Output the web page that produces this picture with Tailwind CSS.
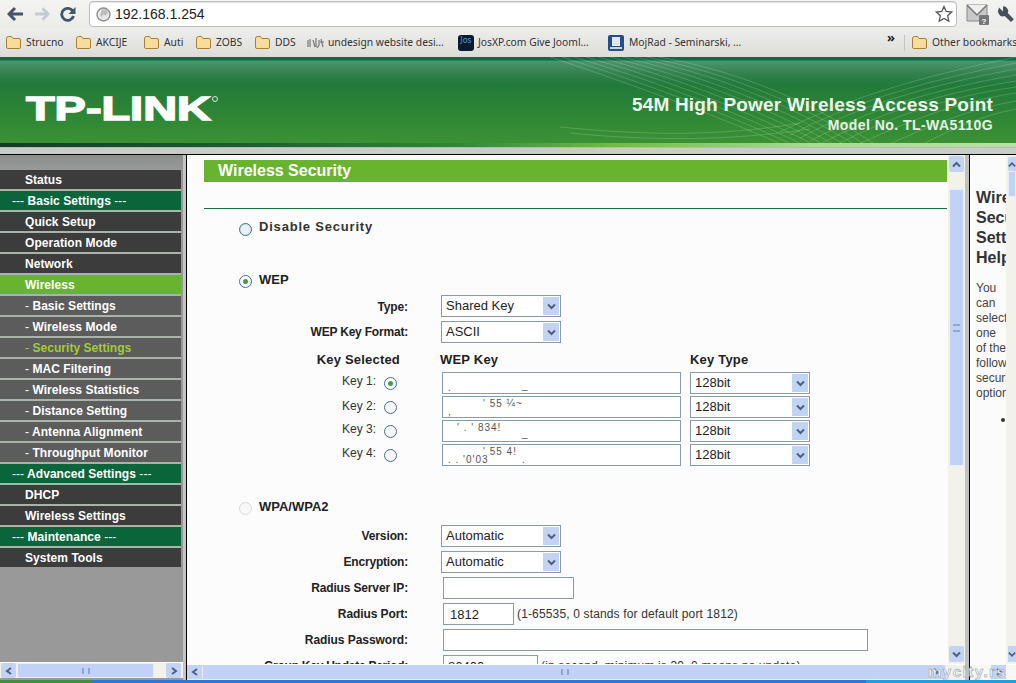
<!DOCTYPE html>
<html><head><meta charset="utf-8"><script src="https://cdn.jsdelivr.net/npm/@tailwindcss/browser@4"></script></head>
<body class="w-[1016px] h-[683px] overflow-hidden bg-[#c8cdc8] font-['Liberation_Sans',sans-serif] text-[#222]">
<div class="relative w-[1016px] h-[683px] flex flex-col overflow-hidden">

<!-- toolbar -->
<div class="h-[28px] flex items-center bg-gradient-to-b from-[#f4f4f2] to-[#ebebe8]">
  <div class="w-[89px] h-full flex items-center pl-[7px] gap-[10px]">
    <svg class="w-[17px] h-[16px]" viewBox="0 0 17 16"><path d="M8 2 2 8l6 6M2.500 8H16" fill="none" stroke="#44546a" stroke-width="3"/></svg>
    <svg class="w-[16px] h-[16px]" viewBox="0 0 17 16"><path d="M9 2l6 6-6 6M14.500 8H1" fill="none" stroke="#c6cad0" stroke-width="3"/></svg>
    <svg class="w-[16px] h-[16px]" viewBox="0 0 16 16"><path d="M13 5.500A6 6 0 1 0 13.500 10" fill="none" stroke="#44546a" stroke-width="2.800"/><path d="M15.500 1v7h-7z" fill="#44546a"/></svg>
  </div>
  <div class="w-[868px] h-[26px] flex items-center bg-white border border-[#bdbdbb] rounded-[4px] pl-[6px] shadow-[inset_0_1px_1px_#e5e5e5]">
    <svg class="w-[15px] h-[15px]" viewBox="0 0 15 15"><circle cx="7.500" cy="7.500" r="6.500" fill="#e8e8e8" stroke="#8d8d8d" stroke-width="1.400"/><path d="M6 2.500c3-1 5 1 6 3l-2 3-3-1-1 3-2-3 1-2z" fill="#bdbdbd"/></svg>
    <span class="ml-[4px] text-[14px] text-[#222]">192.168.1.254</span>
    <svg class="ml-auto mr-[3px] w-[18px] h-[18px]" viewBox="0 0 18 18"><path d="M9 1.500l2.300 5 5.400.6-4 3.700 1.100 5.400L9 13.500l-4.800 2.700 1.100-5.400-4-3.700 5.400-.6z" fill="#fff" stroke="#555" stroke-width="1.300"/></svg>
  </div>
  <svg class="ml-[9px] w-[24px] h-[24px]" viewBox="0 0 24 24"><path d="M1 3h20v16H1z" fill="#c9c9c9" stroke="#8a8a8a"/><path d="M1 3l10 10L21 3" fill="#eee" stroke="#777" stroke-width="1.500"/><rect x="13" y="13" width="10" height="10" rx="1" fill="#777"/><text x="18" y="21.500" font-size="8" font-weight="700" fill="#fff" text-anchor="middle" font-family="Liberation Sans">?</text></svg>
  <svg class="ml-[7px] w-[18px] h-[18px]" viewBox="0 0 18 18"><path d="M2 2.500 6 6.500V1.200A5 5 0 0 1 10.800 8l6 6.300-2.800 2.800-6.300-6A5 5 0 0 1 1 6z" fill="#44505f"/></svg>
</div>

<!-- bookmarks -->
<div class="h-[29px] flex items-center pl-[6px] text-[10.300px] text-[#333] font-['Noto_Sans',sans-serif] bg-gradient-to-b from-[#eeeeec] to-[#dcdcd9] whitespace-nowrap">
  <div class="w-[70px] shrink-0 flex items-center gap-[5px]"><svg class="w-[15px] h-[13px] shrink-0" viewBox="0 0 15 13"><path d="M.5 2.500q0-2 2-2h3l1.500 2h6q1.500 0 1.500 1.500v7q0 1.500-1.500 1.500h-11q-1.500 0-1.500-1.500z" fill="#f7dc9b" stroke="#a97f35"/></svg><span>Strucno</span></div>
  <div class="w-[68px] shrink-0 flex items-center gap-[5px]"><svg class="w-[15px] h-[13px] shrink-0" viewBox="0 0 15 13"><path d="M.5 2.500q0-2 2-2h3l1.500 2h6q1.500 0 1.500 1.500v7q0 1.500-1.500 1.500h-11q-1.500 0-1.500-1.500z" fill="#f7dc9b" stroke="#a97f35"/></svg><span>AKCIJE</span></div>
  <div class="w-[52px] shrink-0 flex items-center gap-[5px]"><svg class="w-[15px] h-[13px] shrink-0" viewBox="0 0 15 13"><path d="M.5 2.500q0-2 2-2h3l1.500 2h6q1.500 0 1.500 1.500v7q0 1.500-1.500 1.500h-11q-1.500 0-1.500-1.500z" fill="#f7dc9b" stroke="#a97f35"/></svg><span>Auti</span></div>
  <div class="w-[59px] shrink-0 flex items-center gap-[5px]"><svg class="w-[15px] h-[13px] shrink-0" viewBox="0 0 15 13"><path d="M.5 2.500q0-2 2-2h3l1.500 2h6q1.500 0 1.500 1.500v7q0 1.500-1.500 1.500h-11q-1.500 0-1.500-1.500z" fill="#f7dc9b" stroke="#a97f35"/></svg><span>ZOBS</span></div>
  <div class="w-[52px] shrink-0 flex items-center gap-[5px]"><svg class="w-[15px] h-[13px] shrink-0" viewBox="0 0 15 13"><path d="M.5 2.500q0-2 2-2h3l1.500 2h6q1.500 0 1.500 1.500v7q0 1.500-1.500 1.500h-11q-1.500 0-1.500-1.500z" fill="#f7dc9b" stroke="#a97f35"/></svg><span>DDS</span></div>
  <div class="w-[151px] shrink-0 flex items-center gap-[4px]"><svg class="w-[17px] h-[12px] shrink-0" viewBox="0 0 17 12"><path d="M1 3v7M3 2v8M6 3l2 7M9 1v9M12 3v5l-2 3M14 2l2 8M13 5h4" stroke="#777" stroke-width="1.200" fill="none"/></svg><span>undesign website desi...</span></div>
  <div class="w-[150px] shrink-0 flex items-center gap-[4px]"><span class="w-[16px] h-[16px] shrink-0 rounded-[3px] bg-[#0c1a2c] text-[#4f9be0] text-[8px] leading-[9px] text-center overflow-hidden">Jos</span><span>JosXP.com Give Jooml...</span></div>
  <div class="w-[279px] shrink-0 flex items-center gap-[5px]"><svg class="w-[16px] h-[16px] shrink-0" viewBox="0 0 16 16"><rect width="16" height="16" rx="2" fill="#224f86"/><path d="M4 2h8v9H4z" fill="#dfe8f2"/><path d="M2 12h12v2H2z" fill="#c5d4e4"/></svg><span>MojRad - Seminarski, ...</span></div>
  <div class="w-[17px] shrink-0 font-bold text-[13px] -mt-[9px] text-[#222]">»</div>
  <div class="w-[8px] h-[16px] shrink-0 border-l border-[#c4c4c2]"></div>
  <div class="flex items-center gap-[5px]"><svg class="w-[15px] h-[13px] shrink-0" viewBox="0 0 15 13"><path d="M.5 2.500q0-2 2-2h3l1.500 2h6q1.500 0 1.500 1.500v7q0 1.500-1.500 1.500h-11q-1.500 0-1.500-1.500z" fill="#f7dc9b" stroke="#a97f35"/></svg><span>Other bookmarks</span></div>
</div>

<!-- header -->
<div class="relative h-[91px] overflow-hidden bg-[linear-gradient(180deg,#0f6a3f_0,#0f6a3f_3px,#4d9470_4px,#2f8048_18px,#227a3a_28px,#2f8735_60px,#3b9134_86px)]">
  <svg class="absolute inset-0 w-[1016px] h-[91px]" viewBox="0 0 1016 91" fill="none" stroke="#fff" stroke-opacity=".25" stroke-width=".7">
    <path d="M550 0C640 30 720 60 790 91"/><path d="M562 0C650 28 730 58 800 91"/><path d="M574 0C660 26 740 56 810 91"/><path d="M586 0C670 24 750 54 820 91"/><path d="M598 0C680 22 760 52 830 91"/><path d="M610 0C690 20 770 50 840 91"/><path d="M622 0C700 18 780 48 850 91"/><path d="M634 0C710 16 790 46 860 91"/><path d="M646 0C720 14 800 44 870 91"/><path d="M658 0C730 12 810 42 880 91"/>
    <path d="M1016 0C920 20 850 40 780 75"/><path d="M1016 6C925 24 855 44 790 78"/><path d="M1016 12C930 28 860 48 800 81"/><path d="M1016 18C935 32 870 52 810 84"/><path d="M1016 24C940 36 880 56 820 87"/><path d="M1016 30C945 40 890 60 830 91"/><path d="M1016 36C950 46 905 66 850 91"/><path d="M1016 44C960 54 925 72 880 91"/><path d="M1016 52C975 60 945 76 915 91"/>
    <path d="M560 70C640 78 720 80 800 66"/><path d="M570 76C650 84 730 84 810 72"/>
  </svg>
  <div class="absolute left-0 bottom-[1px] w-full h-[4px] bg-[linear-gradient(90deg,#17392a_0,#1c5f34_25%,#2a8a35_45%,#6cbc45_60%,#a8dc8a_80%,#b8e0a8_100%)]"></div>
  <div class="absolute left-0 bottom-0 w-full h-[1px] bg-[#b4bdb4]"></div>
  <div class="absolute left-[26px] top-[35px] origin-left scale-x-[1.42] text-[33px] leading-[33px] font-bold text-white [-webkit-text-stroke:1.4px_white] whitespace-nowrap">TP-LINK</div>
  <div class="absolute left-[212px] top-[39px] w-[6px] h-[6px] rounded-full border border-white/80"></div>
  <div class="absolute right-[23px] top-[36px] text-[19px] leading-[24px] font-bold text-[#eef5ec] tracking-[.2px] whitespace-nowrap text-right">54M High Power Wireless Access Point</div>
  <div class="absolute right-[23px] top-[59px] text-[14px] leading-[18px] font-bold text-[#e8f2e6] tracking-[.45px] whitespace-nowrap text-right">Model No. TL-WA5110G</div>
</div>

<div class="h-[6px] bg-[#c8cdc8]"></div>

<!-- frames -->
<div class="flex h-[526px] border-t border-black">
  <!-- left frame -->
  <div class="w-[183px] shrink-0 flex flex-col bg-[#999] bg-[linear-gradient(180deg,#8b8f8c_0,#999_15px)]">
    <div class="flex-1 pt-[15px] pr-[2px]">
      <div class="flex flex-col gap-[2px] bg-[#a9b3aa] text-[12px] font-bold text-white tracking-[.05px] leading-[20px]">
        <div class="h-[19px] pl-[25px] bg-[#3c3c3c]">Status</div>
        <div class="h-[19px] pl-[12px] bg-[#0a663a]"><span class="font-normal">---</span> Basic Settings <span class="font-normal">---</span></div>
        <div class="h-[19px] pl-[25px] bg-[#3c3c3c]">Quick Setup</div>
        <div class="h-[19px] pl-[25px] bg-[#3c3c3c]">Operation Mode</div>
        <div class="h-[19px] pl-[25px] bg-[#3c3c3c]">Network</div>
        <div class="h-[19px] pl-[25px] bg-[#69b42e]">Wireless</div>
        <div class="h-[19px] pl-[25px] bg-[#5c5c5c]"><span class="font-normal">-</span> Basic Settings</div>
        <div class="h-[19px] pl-[25px] bg-[#5c5c5c]"><span class="font-normal">-</span> Wireless Mode</div>
        <div class="h-[19px] pl-[25px] bg-[#5c5c5c] text-[#a4cb35]"><span class="font-normal">-</span> Security Settings</div>
        <div class="h-[19px] pl-[25px] bg-[#5c5c5c]"><span class="font-normal">-</span> MAC Filtering</div>
        <div class="h-[19px] pl-[25px] bg-[#5c5c5c]"><span class="font-normal">-</span> Wireless Statistics</div>
        <div class="h-[19px] pl-[25px] bg-[#5c5c5c]"><span class="font-normal">-</span> Distance Setting</div>
        <div class="h-[19px] pl-[25px] bg-[#5c5c5c]"><span class="font-normal">-</span> Antenna Alignment</div>
        <div class="h-[19px] pl-[25px] bg-[#5c5c5c]"><span class="font-normal">-</span> Throughput Monitor</div>
        <div class="h-[19px] pl-[12px] bg-[#0a663a]"><span class="font-normal">---</span> Advanced Settings <span class="font-normal">---</span></div>
        <div class="h-[19px] pl-[25px] bg-[#3c3c3c]">DHCP</div>
        <div class="h-[19px] pl-[25px] bg-[#3c3c3c]">Wireless Settings</div>
        <div class="h-[19px] pl-[12px] bg-[#0a663a]"><span class="font-normal">---</span> Maintenance <span class="font-normal">---</span></div>
        <div class="h-[19px] pl-[25px] bg-[#3c3c3c]">System Tools</div>
      </div>
    </div>
    <!-- left hscroll -->
    <div class="h-[16px] mb-[2px] flex items-center bg-[#f3f2ea] border-t border-white">
      <div class="w-[15px] h-[15px] ml-[1px] rounded-[2px] bg-[#c3d3f4] flex items-center justify-center"><svg class="w-[8px] h-[8px]" viewBox="0 0 8 8"><path d="M6 1 2 4l4 3" fill="none" stroke="#4d6185" stroke-width="2"/></svg></div>
      <div class="ml-[1px] w-[137px] h-[15px] bg-[#c1d2f6] rounded-[2px] border border-[#e6edfb] flex items-center justify-center"><span class="w-[8px] h-[6px] border-x-2 border-[#8ea6d4]"></span></div>
      <div class="ml-auto w-[15px] h-[15px] mr-[2px] rounded-[2px] bg-[#c3d3f4] flex items-center justify-center"><svg class="w-[8px] h-[8px]" viewBox="0 0 8 8"><path d="M2 1l4 3-4 3" fill="none" stroke="#4d6185" stroke-width="2"/></svg></div>
    </div>
  </div>
  <div class="w-[3px] shrink-0 bg-[#c4c4c4]"></div>
  <!-- main frame -->
  <div class="w-[779px] shrink-0 flex flex-col border-l border-black bg-[#fbfcfb]">
    <div class="h-[509px] flex overflow-hidden">
      <div class="w-[761px] pl-[17px] overflow-hidden whitespace-nowrap">
        <div class="mt-[5px] h-[22px] w-[743px] pl-[14px] bg-[#69b42e] text-white font-bold text-[16px] leading-[21px]">Wireless Security</div>
        <div class="mt-[26px] h-[1px] w-[743px] bg-[#1a6d42]"></div>
        <div class="mt-[8px] h-[20px] flex items-center pl-[35px]">
          <span class="w-[13px] h-[13px] mt-[5px] rounded-full border border-[#44708f] bg-[#eef1f4] shadow-[inset_0_0_2px_#9cb]"></span>
          <span class="ml-[7px] text-[13px] font-bold tracking-[.8px] text-[#333]">Disable Security</span>
        </div>
        <div class="mt-[33px] h-[20px] flex items-center pl-[35px]">
          <span class="w-[13px] h-[13px] mt-[3px] rounded-full border border-[#44708f] bg-white flex items-center justify-center"><span class="w-[5px] h-[5px] rounded-full bg-[#3f9d50]"></span></span>
          <span class="ml-[7px] text-[13px] font-bold text-[#222]">WEP</span>
        </div>
        <div class="mt-[5px] h-[22px] flex items-center -ml-[17px]"><span class="w-[221px] mt-[1px] text-right text-[12px] font-bold tracking-[-.1px] text-[#222]">Type:</span><div class="ml-[33px] w-[120px] h-[22px] flex items-center justify-between border border-[#8a9ba8] bg-white pl-[4px] text-[13px]">Shared Key<span class="w-[16px] h-[18px] mr-[1px] bg-[#c3d3f4] flex items-center justify-center"><svg class="w-[9px] h-[7px]" viewBox="0 0 9 7"><path d="M1 1.500l3.500 3.500L8 1.500" fill="none" stroke="#4d6185" stroke-width="2"/></svg></span></div></div>
        <div class="mt-[4px] h-[22px] flex items-center -ml-[17px]"><span class="w-[221px] text-right text-[12px] font-bold tracking-[-.2px] text-[#222]">WEP Key Format:</span><div class="ml-[33px] w-[120px] h-[22px] flex items-center justify-between border border-[#8a9ba8] bg-white pl-[4px] text-[13px]">ASCII<span class="w-[16px] h-[18px] mr-[1px] bg-[#c3d3f4] flex items-center justify-center"><svg class="w-[9px] h-[7px]" viewBox="0 0 9 7"><path d="M1 1.500l3.500 3.500L8 1.500" fill="none" stroke="#4d6185" stroke-width="2"/></svg></span></div></div>
        <div class="mt-[7px] h-[20px] flex items-center -ml-[17px] text-[13px] font-bold tracking-[.2px] text-[#222]"><span class="w-[213px] text-right">Key Selected</span><span class="ml-[40px] w-[250px]">WEP Key</span><span>Key Type</span></div>
        <div class="mt-[2px] h-[22px] flex items-center -ml-[17px]"><span class="w-[189px] -mt-[4px] text-right text-[12px] text-[#333]">Key 1:</span><span class="ml-[8px] mt-[1px] w-[13px] h-[13px] rounded-full border border-[#44708f] bg-white flex items-center justify-center"><span class="w-[5px] h-[5px] rounded-full bg-[#3f9d50]"></span></span><span class="relative ml-[45px] w-[239px] h-[22px] border border-[#8a9ba8] bg-white overflow-hidden text-[10px] leading-[12px] text-[#555]"><span class="absolute left-[5px] top-[9px]">.</span><span class="absolute left-[79px] top-[7px]">_</span></span><div class="ml-[9px] w-[120px] h-[22px] flex items-center justify-between border border-[#8a9ba8] bg-white pl-[4px] text-[13px]">128bit<span class="w-[16px] h-[18px] mr-[1px] bg-[#c3d3f4] flex items-center justify-center"><svg class="w-[9px] h-[7px]" viewBox="0 0 9 7"><path d="M1 1.500l3.500 3.500L8 1.500" fill="none" stroke="#4d6185" stroke-width="2"/></svg></span></div></div>
        <div class="mt-[2px] h-[22px] flex items-center -ml-[17px]"><span class="w-[189px] -mt-[3px] text-right text-[12px] text-[#333]">Key 2:</span><span class="ml-[8px] w-[13px] h-[13px] rounded-full border border-[#44708f] bg-[#f6f6f6]"></span><span class="relative ml-[45px] w-[239px] h-[22px] border border-[#8a9ba8] bg-white overflow-hidden text-[10px] leading-[12px] text-[#555]"><span class="absolute left-[5px] top-[9px]">,</span><span class="absolute left-[40px] top-[1px] tracking-[1px]">' 55 ¼~</span></span><div class="ml-[9px] w-[120px] h-[22px] flex items-center justify-between border border-[#8a9ba8] bg-white pl-[4px] text-[13px]">128bit<span class="w-[16px] h-[18px] mr-[1px] bg-[#c3d3f4] flex items-center justify-center"><svg class="w-[9px] h-[7px]" viewBox="0 0 9 7"><path d="M1 1.500l3.500 3.500L8 1.500" fill="none" stroke="#4d6185" stroke-width="2"/></svg></span></div></div>
        <div class="mt-[2px] h-[22px] flex items-center -ml-[17px]"><span class="w-[189px] -mt-[4px] text-right text-[12px] text-[#333]">Key 3:</span><span class="ml-[8px] w-[13px] h-[13px] rounded-full border border-[#44708f] bg-[#f6f6f6]"></span><span class="relative ml-[45px] w-[239px] h-[22px] border border-[#8a9ba8] bg-white overflow-hidden text-[10px] leading-[12px] text-[#555]"><span class="absolute left-[14px] top-[1px] tracking-[1px]">' . ' 834!</span><span class="absolute left-[79px] top-[7px]">_</span></span><div class="ml-[9px] w-[120px] h-[22px] flex items-center justify-between border border-[#8a9ba8] bg-white pl-[4px] text-[13px]">128bit<span class="w-[16px] h-[18px] mr-[1px] bg-[#c3d3f4] flex items-center justify-center"><svg class="w-[9px] h-[7px]" viewBox="0 0 9 7"><path d="M1 1.500l3.500 3.500L8 1.500" fill="none" stroke="#4d6185" stroke-width="2"/></svg></span></div></div>
        <div class="mt-[2px] h-[22px] flex items-center -ml-[17px]"><span class="w-[189px] -mt-[4px] text-right text-[12px] text-[#333]">Key 4:</span><span class="ml-[8px] w-[13px] h-[13px] rounded-full border border-[#44708f] bg-[#f6f6f6]"></span><span class="relative ml-[45px] w-[239px] h-[22px] border border-[#8a9ba8] bg-white overflow-hidden text-[10px] leading-[12px] text-[#555]"><span class="absolute left-[40px] top-[1px] tracking-[1px]">' 55 4!</span><span class="absolute left-[5px] top-[9px] tracking-[1px]">. . '0'03</span><span class="absolute left-[79px] top-[9px]">.</span></span><div class="ml-[9px] w-[120px] h-[22px] flex items-center justify-between border border-[#8a9ba8] bg-white pl-[4px] text-[13px]">128bit<span class="w-[16px] h-[18px] mr-[1px] bg-[#c3d3f4] flex items-center justify-center"><svg class="w-[9px] h-[7px]" viewBox="0 0 9 7"><path d="M1 1.500l3.500 3.500L8 1.500" fill="none" stroke="#4d6185" stroke-width="2"/></svg></span></div></div>
        <div class="mt-[31px] h-[20px] flex items-center pl-[35px]">
          <span class="w-[13px] h-[13px] mt-[3px] rounded-full border border-[#d8d8d8] bg-[#f8f8f8]"></span>
          <span class="ml-[7px] text-[13px] font-bold text-[#222]">WPA/WPA2</span>
        </div>
        <div class="mt-[8px] h-[22px] flex items-center -ml-[17px]"><span class="w-[221px] text-right text-[12px] font-bold tracking-[-.1px] text-[#222]">Version:</span><div class="ml-[33px] w-[120px] h-[22px] flex items-center justify-between border border-[#8a9ba8] bg-white pl-[4px] text-[13px]">Automatic<span class="w-[16px] h-[18px] mr-[1px] bg-[#c3d3f4] flex items-center justify-center"><svg class="w-[9px] h-[7px]" viewBox="0 0 9 7"><path d="M1 1.500l3.500 3.500L8 1.500" fill="none" stroke="#4d6185" stroke-width="2"/></svg></span></div></div>
        <div class="mt-[4px] h-[22px] flex items-center -ml-[17px]"><span class="w-[221px] text-right text-[12px] font-bold tracking-[-.2px] text-[#222]">Encryption:</span><div class="ml-[33px] w-[120px] h-[22px] flex items-center justify-between border border-[#8a9ba8] bg-white pl-[4px] text-[13px]">Automatic<span class="w-[16px] h-[18px] mr-[1px] bg-[#c3d3f4] flex items-center justify-center"><svg class="w-[9px] h-[7px]" viewBox="0 0 9 7"><path d="M1 1.500l3.500 3.500L8 1.500" fill="none" stroke="#4d6185" stroke-width="2"/></svg></span></div></div>
        <div class="mt-[4px] h-[22px] flex items-center -ml-[17px]"><span class="w-[221px] text-right text-[12px] font-bold tracking-[-.15px] text-[#222]">Radius Server IP:</span><span class="ml-[35px] w-[131px] h-[22px] border border-[#8a9ba8] bg-white"></span></div>
        <div class="mt-[4px] h-[22px] flex items-center -ml-[17px]"><span class="w-[221px] text-right text-[12px] font-bold tracking-[-.1px] text-[#222]">Radius Port:</span><span class="ml-[35px] w-[71px] h-[22px] border border-[#8a9ba8] bg-white pl-[6px] text-[13px] leading-[21px]">1812</span><span class="ml-[3px] text-[12px] tracking-[.15px] text-[#333]">(1-65535, 0 stands for default port 1812)</span></div>
        <div class="mt-[4px] h-[22px] flex items-center -ml-[17px]"><span class="w-[221px] text-right text-[12px] font-bold tracking-[-.05px] text-[#222]">Radius Password:</span><span class="ml-[35px] w-[425px] h-[22px] border border-[#8a9ba8] bg-white"></span></div>
        <div class="mt-[4px] h-[22px] flex items-center -ml-[17px]"><span class="w-[221px] text-right text-[12px] font-bold tracking-[-.25px] text-[#222]">Group Key Update Period:</span><span class="ml-[35px] w-[95px] h-[22px] border border-[#8a9ba8] bg-white pl-[4px] text-[13px] leading-[21px]">86400</span><span class="ml-[3px] text-[12px] tracking-[.15px] text-[#333]">(in second, minimum is 30, 0 means no update)</span></div>
      </div>
      <!-- main vscroll -->
      <div class="w-[17px] flex flex-col items-center bg-[#f3f2ea] pt-[1px]">
        <div class="w-[15px] h-[16px] rounded-[2px] bg-[#c3d3f4] flex items-center justify-center"><svg class="w-[9px] h-[7px]" viewBox="0 0 9 7"><path d="M1 5.500 4.500 2 8 5.500" fill="none" stroke="#4d6185" stroke-width="2"/></svg></div>
        <div class="mt-[17px] w-[15px] h-[277px] rounded-[2px] bg-[#c1d2f6] border border-[#e6edfb] flex items-center justify-center"><span class="w-[7px] h-[8px] border-y-2 border-[#8ea6d4]"></span></div>
        <div class="mt-auto mb-[2px] w-[15px] h-[16px] rounded-[2px] bg-[#c3d3f4] flex items-center justify-center"><svg class="w-[9px] h-[7px]" viewBox="0 0 9 7"><path d="M1 1.500l3.500 3.500L8 1.500" fill="none" stroke="#4d6185" stroke-width="2"/></svg></div>
      </div>
    </div>
    <!-- main hscroll -->
    <div class="h-[15px] flex items-center bg-[#c1d2f6] border-t border-white">
      <div class="w-[15px] h-[14px] ml-[1px] rounded-[2px] bg-[#c3d3f4] flex items-center justify-center border-r border-[#e6edfb]"><svg class="w-[8px] h-[8px]" viewBox="0 0 8 8"><path d="M6 1 2 4l4 3" fill="none" stroke="#4d6185" stroke-width="2"/></svg></div>
      <div class="flex-1 flex justify-center"><span class="w-[8px] h-[6px] border-x-2 border-[#8ea6d4]"></span></div>
      <div class="w-[38px] h-[14px] flex bg-[#f3f2ea]"><div class="w-[18px] h-[14px] bg-[#c3d3f4] flex items-center justify-center"><svg class="w-[8px] h-[8px]" viewBox="0 0 8 8"><path d="M2 1l4 3-4 3" fill="none" stroke="#4d6185" stroke-width="2"/></svg></div></div>
    </div>
    <div class="h-[1px] bg-[#eef1f8]"></div>
  </div>
  <div class="w-[4px] shrink-0 bg-[#c0c0c0]"></div>
  <!-- right frame -->
  <div class="flex-1 min-w-0 flex flex-col overflow-hidden border-l border-black bg-[#fbfbfb]">
    <div class="h-[509px] flex overflow-hidden">
      <div class="w-[36px] shrink-0 pl-[6px] overflow-hidden whitespace-nowrap text-[#444]">
        <div class="mt-[33px] text-[16px] leading-[20px] font-bold text-[#333]">Wireless<br>Security<br>Settings<br>Help</div>
        <div class="mt-[13px] text-[12px] leading-[15px]">You<br>can<br>select<br>one<br>of the<br>following<br>security<br>options</div>
        <div class="mt-[17px] ml-[25px] w-[4px] h-[4px] rounded-full bg-[#333]"></div>
      </div>
      <div class="w-[2px] shrink-0 bg-[#f3f2ea]"></div>
      <div class="flex-1 min-w-0 flex flex-col bg-[#f3f2ea] pt-[2px]">
        <div class="w-full h-[14px] rounded-l-[2px] bg-[#c3d3f4] flex items-center justify-center"><svg class="w-[8px] h-[7px]" viewBox="0 0 9 7"><path d="M1 5.500 4.500 2 8 5.500" fill="none" stroke="#4d6185" stroke-width="2"/></svg></div>
        <div class="w-full h-[26px] bg-[#c1d2f6] border border-[#e6edfb]"></div>
        <div class="mt-auto mb-[2px] w-full h-[16px] bg-[#c3d3f4] flex items-center justify-center"><svg class="w-[8px] h-[7px]" viewBox="0 0 9 7"><path d="M1 1.500l3.500 3.500L8 1.500" fill="none" stroke="#4d6185" stroke-width="2"/></svg></div>
      </div>
    </div>
    <div class="h-[15px] flex items-center justify-end pr-[10px] bg-[#f7f7f4] border-t border-white">
      <div class="w-[15px] h-[14px] bg-[#c3d3f4] flex items-center justify-center"><svg class="w-[8px] h-[8px]" viewBox="0 0 8 8"><path d="M2 1l4 3-4 3" fill="none" stroke="#4d6185" stroke-width="2"/></svg></div>
    </div>
  </div>
</div>

<!-- taskbar -->
<div class="absolute left-0 bottom-0 w-full h-[3px] flex bg-[#2a78d8]"><div class="w-[92px] bg-[#3f8f3c]"></div><div class="flex-1"></div><div class="w-[150px] bg-[#1fa0dc]"></div></div>

<!-- watermark -->
<div class="absolute left-[928px] top-[663px] text-[15px] leading-[18px] font-bold tracking-[1.500px] text-[#f3f6fa] [-webkit-text-stroke:.5px_#8a94a4]">mycity.rs</div>
</div>
</body></html>
